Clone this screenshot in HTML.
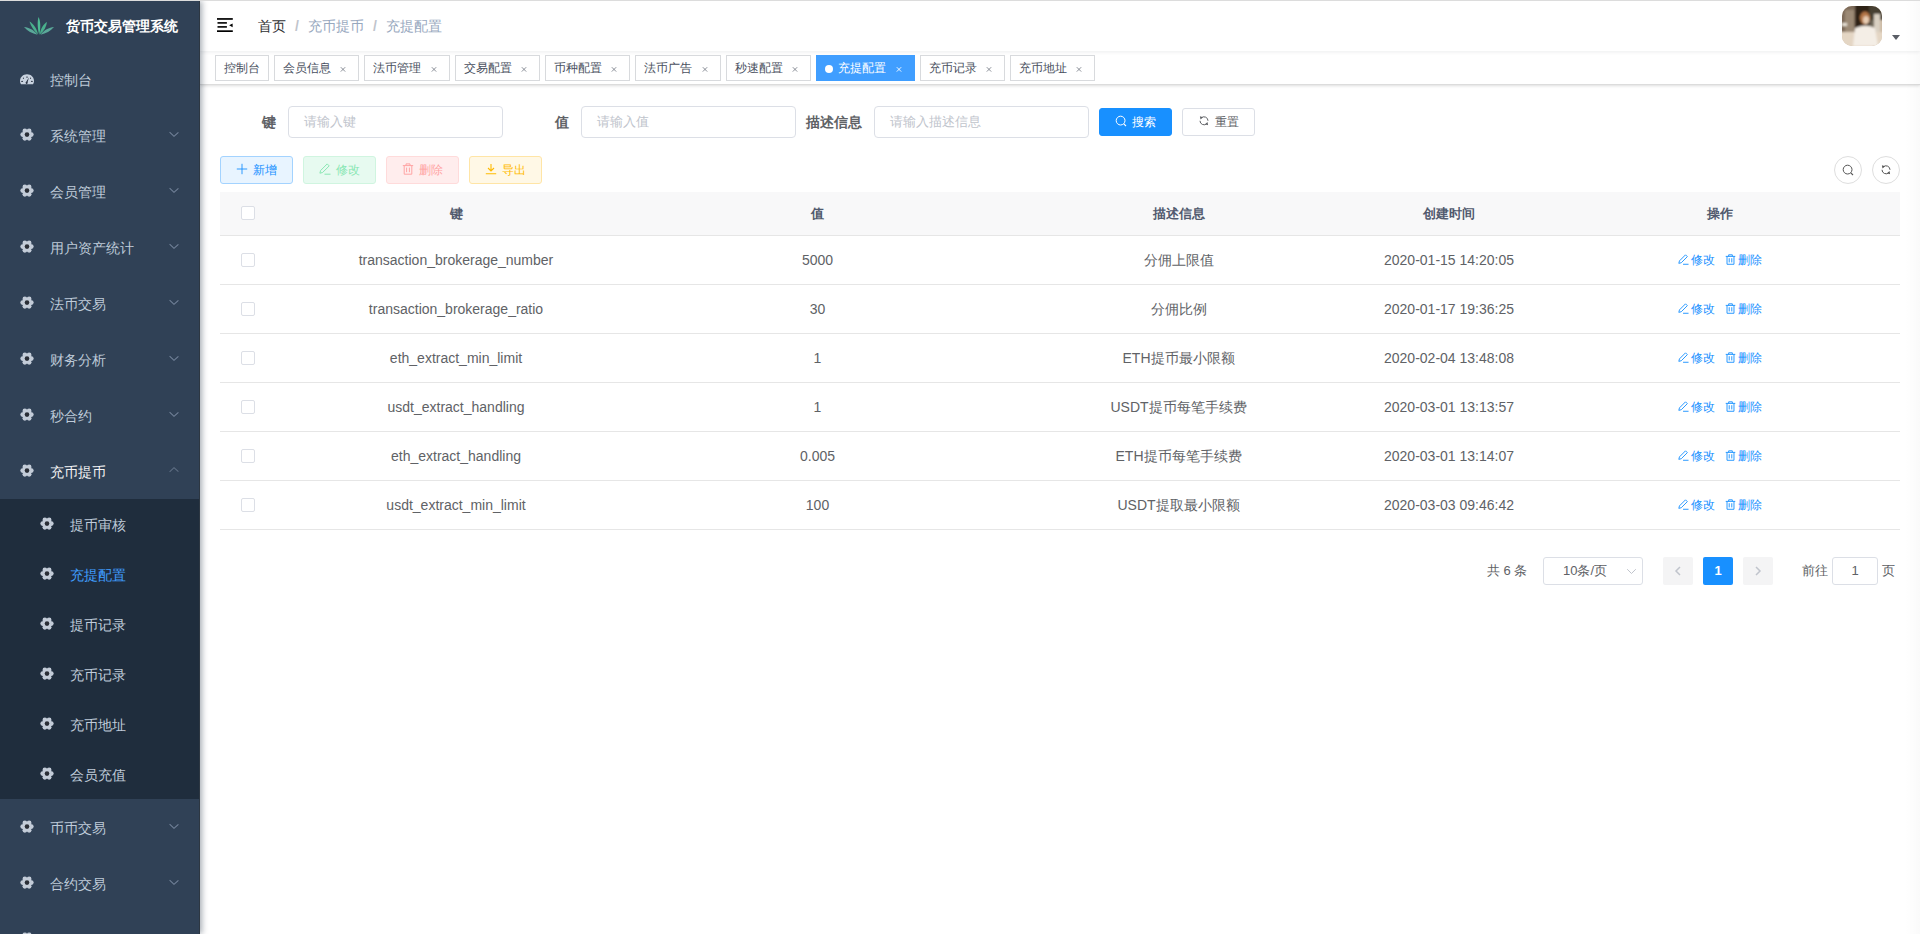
<!DOCTYPE html>
<html><head><meta charset="utf-8">
<style>
*{box-sizing:border-box;margin:0;padding:0}
html,body{width:1920px;height:934px;overflow:hidden;background:#fff;font-family:"Liberation Sans",sans-serif;}
.abs{position:absolute}
#topline{position:absolute;left:0;top:0;width:1920px;height:1px;background:#dcdcdc;z-index:50}
#rstrip{position:absolute;left:1905px;top:1px;width:15px;height:933px;background:linear-gradient(90deg,rgba(0,0,0,0),rgba(0,0,0,.02));z-index:40}
#main{position:absolute;left:0;top:0;width:1920px;height:934px}
/* sidebar */
#side{position:absolute;left:0;top:1px;width:200px;height:933px;background:#304156;z-index:10;box-shadow:2px 0 6px rgba(0,21,41,.35);overflow:hidden}
#sedge{position:absolute;left:199px;top:1px;width:1px;height:933px;background:#2d3742;z-index:11}
#logo{position:absolute;left:0;top:0;width:200px;height:50px}
#logo .t{position:absolute;left:66px;top:0;line-height:50px;color:#fff;font-weight:bold;font-size:14px;white-space:nowrap}
.mi{position:absolute;left:0;width:200px;height:56px;line-height:56px;color:#bfcbd9;font-size:14px}
.mi .ic{position:absolute;left:20px;top:21px;width:14px;height:14px}
.mi .tx{position:absolute;left:50px;top:1px}
.mi .ar{position:absolute;left:169px;top:24px;width:10px;height:6px}
.sub{position:absolute;left:0;width:200px;height:300px;background:#1f2d3d}
.si{position:absolute;left:0;width:200px;height:50px;line-height:50px;color:#bfcbd9;font-size:14px}
.si .ic{position:absolute;left:40px;top:18px;width:14px;height:14px}
.si .tx{position:absolute;left:70px;top:1px}
.si.act{color:#409eff}
/* navbar */
#nav{position:absolute;left:200px;top:1px;width:1720px;height:50px;background:#fff;box-shadow:0 1px 4px rgba(0,21,41,.08);z-index:5}
#hamb{position:absolute;left:17px;top:17px}
.bc{position:absolute;top:0;line-height:50px;font-size:14px;white-space:nowrap}
#avatar{position:absolute;left:1642px;top:5px;width:40px;height:40px;border-radius:10px;background:linear-gradient(180deg,#4a3a2c 0%,#8a7560 30%,#e8e0d6 60%,#f3eee6 100%)}
/* tags */
#tags{position:absolute;left:200px;top:51px;width:1720px;height:34px;background:#fff;border-bottom:1px solid #dcdcdc;box-shadow:0 1px 3px 0 rgba(0,0,0,.12),0 0 3px 0 rgba(0,0,0,.04);z-index:4}
.tg{position:absolute;top:4px;height:26px;line-height:24px;border:1px solid #d8dadd;color:#495060;background:#fff;font-size:12px;padding-left:8px;white-space:nowrap}
.tg .x{position:absolute;top:4px;width:16px;height:16px}
.tg.act{background:#409eff;border-color:#409eff;color:#fff}
.tg.act .x{color:#fff}
.tg.act .dot{display:inline-block;width:8px;height:8px;border-radius:50%;background:#fff;margin-right:5px;position:relative;top:1px}
/* form */
.lbl{position:absolute;top:106px;height:32px;line-height:32px;font-size:14px;font-weight:bold;color:#606266;text-align:right;white-space:nowrap}
.inp{position:absolute;top:106px;height:32px;width:215px;border:1px solid #dcdfe6;border-radius:4px;background:#fff;line-height:30px;padding-left:15px;font-size:13px;color:#c0c4cc;white-space:nowrap}
.btn{position:absolute;height:28px;border-radius:3px;font-size:12px;line-height:26px;border:1px solid;white-space:nowrap;text-align:center}
.circ{position:absolute;top:156px;width:28px;height:28px;border-radius:50%;border:1px solid #dedede;background:#fff;text-align:center;line-height:26px}
.circ svg{vertical-align:middle;position:relative;top:-1px}
/* table */
#tbl{position:absolute;left:220px;top:191px;width:1680px}
.row{position:absolute;left:0;width:1680px;border-bottom:1px solid #e6e6e6}
.c{position:absolute;top:0;text-align:center;font-size:14px;color:#606266;white-space:nowrap}
.c.th{font-weight:bold;color:#515a6e;font-size:13px}
.c.op{font-size:12px;color:#1890ff}
.chk{position:absolute;left:21px;width:14px;height:14px;border:1px solid #dcdfe6;border-radius:2px;background:#fff}
/* pagination */
.pt{position:absolute;top:557px;line-height:28px;font-size:13px;color:#606266;white-space:nowrap}
.psel{position:absolute;left:1543px;top:557px;width:100px;height:28px;border:1px solid #dcdfe6;border-radius:3px;line-height:26px;font-size:13px;color:#606266}
.pbtn{position:absolute;top:557px;width:30px;height:28px;border-radius:2px;background:#f4f4f5;text-align:center;line-height:28px;font-size:13px;font-weight:bold;color:#606266}
.pbtn svg{vertical-align:middle;position:relative;top:-1px}
.pbtn.act{background:#1890ff;color:#fff}
.pinp{position:absolute;left:1832px;top:557px;width:46px;height:28px;border:1px solid #dcdfe6;border-radius:3px;text-align:center;line-height:26px;font-size:13px;color:#606266}

</style></head>
<body>
<div id="topline"></div>
<div id="main">
<div class="lbl" style="left:220px;width:68px;padding-right:12px">键</div><div class="inp" style="left:288px">请输入键</div><div class="lbl" style="left:513px;width:68px;padding-right:12px">值</div><div class="inp" style="left:581px">请输入值</div><div class="lbl" style="left:806px;width:68px;padding-right:12px">描述信息</div><div class="inp" style="left:874px">请输入描述信息</div><div class="btn" style="left:1099px;top:108px;width:73px;background:#1890ff;border-color:#1890ff;color:#fff"><svg width="12" height="12" viewBox="0 0 12 12" style="vertical-align:-1px;margin-right:5px"><circle cx="5.6" cy="5.6" r="4.4" fill="none" stroke="#fff" stroke-width="1"/><path d="M8.8 8.8l2.2 2.2" stroke="#fff" stroke-width="1.1"/></svg>搜索</div><div class="btn" style="left:1182px;top:108px;width:73px;background:#fff;border-color:#dcdfe6;color:#606266"><svg width="12" height="12" viewBox="0 0 12 12" style="vertical-align:-1px;margin-right:5px"><path d="M3.17 2.97A4 4 0 0 1 10 5.8M2 5.8A4 4 0 0 0 8.83 8.63" fill="none" stroke="#606266" stroke-width="1"/><path d="M1.9 1.3L4.9 2.3L2.5 4.6z M10.1 10.3L7.1 9.3L9.5 7z" fill="#606266"/></svg>重置</div><div class="btn" style="left:220px;top:156px;width:73px;background:#e8f4ff;border-color:#a3d3ff;color:#1890ff"><svg width="12" height="12" viewBox="0 0 12 12" style="vertical-align:-1px;margin-right:5px"><path d="M6 0.8v10.4M0.8 6h10.4" stroke="#1890ff" stroke-width="0.9"/></svg>新增</div><div class="btn" style="left:303px;top:156px;width:73px;background:#e7faf0;border-color:#d0f5e0;color:#89e7b3"><svg width="12" height="12" viewBox="0 0 12 12" style="vertical-align:-1px;margin-right:5px"><path d="M8.2 0.9l2 2-6.6 6.6-2.7 0.7 0.7-2.7z M5.5 11.2h6" fill="none" stroke="#89e7b3" stroke-width="1"/></svg>修改</div><div class="btn" style="left:386px;top:156px;width:73px;background:#ffeded;border-color:#ffdbdb;color:#ffa4a4"><svg width="12" height="12" viewBox="0 0 12 12" style="vertical-align:-1px;margin-right:5px"><path d="M0.8 2.6h10.4M4 2.6V0.9h4v1.7M2.2 2.6v8.6h7.6V2.6M4.6 4.6v4.6M7.4 4.6v4.6" fill="none" stroke="#ffa4a4" stroke-width="1"/></svg>删除</div><div class="btn" style="left:469px;top:156px;width:73px;background:#fff8e6;border-color:#ffe5a6;color:#ffba00"><svg width="12" height="12" viewBox="0 0 12 12" style="vertical-align:-1px;margin-right:5px"><path d="M6 1v7M3 5l3 3 3-3M0.8 10.8h10.4" fill="none" stroke="#ffba00" stroke-width="1.1"/></svg>导出</div><div class="circ" style="left:1834px"><svg width="12" height="12" viewBox="0 0 12 12"><circle cx="5.6" cy="5.6" r="4.4" fill="none" stroke="#555" stroke-width="1"/><path d="M8.8 8.8l2.2 2.2" stroke="#555" stroke-width="1.1"/></svg></div><div class="circ" style="left:1872px"><svg width="12" height="12" viewBox="0 0 12 12"><path d="M3.17 2.97A4 4 0 0 1 10 5.8M2 5.8A4 4 0 0 0 8.83 8.63" fill="none" stroke="#555" stroke-width="1"/><path d="M1.9 1.3L4.9 2.3L2.5 4.6z M10.1 10.3L7.1 9.3L9.5 7z" fill="#555"/></svg></div>
<div id="tbl"><div class="row hdr" style="top:1px;height:44px;background:#f8f8f9"><div class="chk" style="top:14px"></div><div class="c th" style="left:55px;width:362px;line-height:43px">键</div><div class="c th" style="left:417px;width:361px;line-height:43px">值</div><div class="c th" style="left:778px;width:361px;line-height:43px">描述信息</div><div class="c th" style="left:1139px;width:180px;line-height:43px">创建时间</div><div class="c th" style="left:1319px;width:361px;line-height:43px">操作</div></div><div class="row" style="top:45px;height:49px"><div class="chk" style="top:17px"></div><div class="c" style="left:55px;width:362px;line-height:48px">transaction_brokerage_number</div><div class="c" style="left:417px;width:361px;line-height:48px">5000</div><div class="c" style="left:778px;width:361px;line-height:48px">分佣上限值</div><div class="c" style="left:1139px;width:180px;line-height:48px">2020-01-15 14:20:05</div><div class="c op" style="left:1319px;width:361px;line-height:48px"><span><svg width="11" height="11" viewBox="0 0 12 12" style="vertical-align:-1px;margin-right:2px"><path d="M8.2 0.9l2 2-6.6 6.6-2.7 0.7 0.7-2.7z M5.5 11.2h6" fill="none" stroke="#1890ff" stroke-width="1"/></svg>修改</span><span style="margin-left:10px"><svg width="11" height="11" viewBox="0 0 12 12" style="vertical-align:-1px;margin-right:2px"><path d="M0.8 2.6h10.4M4 2.6V0.9h4v1.7M2.2 2.6v8.6h7.6V2.6M4.6 4.6v4.6M7.4 4.6v4.6" fill="none" stroke="#1890ff" stroke-width="1"/></svg>删除</span></div></div><div class="row" style="top:94px;height:49px"><div class="chk" style="top:17px"></div><div class="c" style="left:55px;width:362px;line-height:48px">transaction_brokerage_ratio</div><div class="c" style="left:417px;width:361px;line-height:48px">30</div><div class="c" style="left:778px;width:361px;line-height:48px">分佣比例</div><div class="c" style="left:1139px;width:180px;line-height:48px">2020-01-17 19:36:25</div><div class="c op" style="left:1319px;width:361px;line-height:48px"><span><svg width="11" height="11" viewBox="0 0 12 12" style="vertical-align:-1px;margin-right:2px"><path d="M8.2 0.9l2 2-6.6 6.6-2.7 0.7 0.7-2.7z M5.5 11.2h6" fill="none" stroke="#1890ff" stroke-width="1"/></svg>修改</span><span style="margin-left:10px"><svg width="11" height="11" viewBox="0 0 12 12" style="vertical-align:-1px;margin-right:2px"><path d="M0.8 2.6h10.4M4 2.6V0.9h4v1.7M2.2 2.6v8.6h7.6V2.6M4.6 4.6v4.6M7.4 4.6v4.6" fill="none" stroke="#1890ff" stroke-width="1"/></svg>删除</span></div></div><div class="row" style="top:143px;height:49px"><div class="chk" style="top:17px"></div><div class="c" style="left:55px;width:362px;line-height:48px">eth_extract_min_limit</div><div class="c" style="left:417px;width:361px;line-height:48px">1</div><div class="c" style="left:778px;width:361px;line-height:48px">ETH提币最小限额</div><div class="c" style="left:1139px;width:180px;line-height:48px">2020-02-04 13:48:08</div><div class="c op" style="left:1319px;width:361px;line-height:48px"><span><svg width="11" height="11" viewBox="0 0 12 12" style="vertical-align:-1px;margin-right:2px"><path d="M8.2 0.9l2 2-6.6 6.6-2.7 0.7 0.7-2.7z M5.5 11.2h6" fill="none" stroke="#1890ff" stroke-width="1"/></svg>修改</span><span style="margin-left:10px"><svg width="11" height="11" viewBox="0 0 12 12" style="vertical-align:-1px;margin-right:2px"><path d="M0.8 2.6h10.4M4 2.6V0.9h4v1.7M2.2 2.6v8.6h7.6V2.6M4.6 4.6v4.6M7.4 4.6v4.6" fill="none" stroke="#1890ff" stroke-width="1"/></svg>删除</span></div></div><div class="row" style="top:192px;height:49px"><div class="chk" style="top:17px"></div><div class="c" style="left:55px;width:362px;line-height:48px">usdt_extract_handling</div><div class="c" style="left:417px;width:361px;line-height:48px">1</div><div class="c" style="left:778px;width:361px;line-height:48px">USDT提币每笔手续费</div><div class="c" style="left:1139px;width:180px;line-height:48px">2020-03-01 13:13:57</div><div class="c op" style="left:1319px;width:361px;line-height:48px"><span><svg width="11" height="11" viewBox="0 0 12 12" style="vertical-align:-1px;margin-right:2px"><path d="M8.2 0.9l2 2-6.6 6.6-2.7 0.7 0.7-2.7z M5.5 11.2h6" fill="none" stroke="#1890ff" stroke-width="1"/></svg>修改</span><span style="margin-left:10px"><svg width="11" height="11" viewBox="0 0 12 12" style="vertical-align:-1px;margin-right:2px"><path d="M0.8 2.6h10.4M4 2.6V0.9h4v1.7M2.2 2.6v8.6h7.6V2.6M4.6 4.6v4.6M7.4 4.6v4.6" fill="none" stroke="#1890ff" stroke-width="1"/></svg>删除</span></div></div><div class="row" style="top:241px;height:49px"><div class="chk" style="top:17px"></div><div class="c" style="left:55px;width:362px;line-height:48px">eth_extract_handling</div><div class="c" style="left:417px;width:361px;line-height:48px">0.005</div><div class="c" style="left:778px;width:361px;line-height:48px">ETH提币每笔手续费</div><div class="c" style="left:1139px;width:180px;line-height:48px">2020-03-01 13:14:07</div><div class="c op" style="left:1319px;width:361px;line-height:48px"><span><svg width="11" height="11" viewBox="0 0 12 12" style="vertical-align:-1px;margin-right:2px"><path d="M8.2 0.9l2 2-6.6 6.6-2.7 0.7 0.7-2.7z M5.5 11.2h6" fill="none" stroke="#1890ff" stroke-width="1"/></svg>修改</span><span style="margin-left:10px"><svg width="11" height="11" viewBox="0 0 12 12" style="vertical-align:-1px;margin-right:2px"><path d="M0.8 2.6h10.4M4 2.6V0.9h4v1.7M2.2 2.6v8.6h7.6V2.6M4.6 4.6v4.6M7.4 4.6v4.6" fill="none" stroke="#1890ff" stroke-width="1"/></svg>删除</span></div></div><div class="row" style="top:290px;height:49px"><div class="chk" style="top:17px"></div><div class="c" style="left:55px;width:362px;line-height:48px">usdt_extract_min_limit</div><div class="c" style="left:417px;width:361px;line-height:48px">100</div><div class="c" style="left:778px;width:361px;line-height:48px">USDT提取最小限额</div><div class="c" style="left:1139px;width:180px;line-height:48px">2020-03-03 09:46:42</div><div class="c op" style="left:1319px;width:361px;line-height:48px"><span><svg width="11" height="11" viewBox="0 0 12 12" style="vertical-align:-1px;margin-right:2px"><path d="M8.2 0.9l2 2-6.6 6.6-2.7 0.7 0.7-2.7z M5.5 11.2h6" fill="none" stroke="#1890ff" stroke-width="1"/></svg>修改</span><span style="margin-left:10px"><svg width="11" height="11" viewBox="0 0 12 12" style="vertical-align:-1px;margin-right:2px"><path d="M0.8 2.6h10.4M4 2.6V0.9h4v1.7M2.2 2.6v8.6h7.6V2.6M4.6 4.6v4.6M7.4 4.6v4.6" fill="none" stroke="#1890ff" stroke-width="1"/></svg>删除</span></div></div></div>
<span class="pt" style="left:1487px">共 6 条</span><div class="psel"><span style="position:absolute;left:19px;top:0">10条/页</span><svg style="position:absolute;left:82px;top:10px" width="11" height="7" viewBox="0 0 11 7"><path d="M1.2 1.2l4.3 4.3L9.8 1.2" fill="none" stroke="#c0c4cc" stroke-width="1"/></svg></div><div class="pbtn" style="left:1663px"><svg width="8" height="10" viewBox="0 0 8 10"><path d="M6 1L2 5l4 4" fill="none" stroke="#c0c4cc" stroke-width="1.5"/></svg></div><div class="pbtn act" style="left:1703px">1</div><div class="pbtn" style="left:1743px"><svg width="8" height="10" viewBox="0 0 8 10"><path d="M2 1l4 4-4 4" fill="none" stroke="#c0c4cc" stroke-width="1.5"/></svg></div><span class="pt" style="left:1802px">前往</span><div class="pinp">1</div><span class="pt" style="left:1882px">页</span>
</div>
<div id="nav"><svg id="hamb" width="16" height="14" viewBox="0 0 16 14"><g fill="#000"><rect x="0" y="0.1" width="15.8" height="1.7"/><rect x="0.5" y="4.1" width="9.4" height="1.6"/><rect x="0.5" y="8.1" width="9.4" height="1.6"/><rect x="0" y="12.3" width="15.8" height="1.7"/><path d="M15.6 5.6v3.6L12.2 7.2z"/></g></svg><span class="bc" style="left:58px;color:#303133">首页</span><span class="bc" style="left:95px;color:#c0c4cc;font-weight:bold">/</span><span class="bc" style="left:108px;color:#97a8be">充币提币</span><span class="bc" style="left:173px;color:#c0c4cc;font-weight:bold">/</span><span class="bc" style="left:186px;color:#97a8be">充提配置</span><svg class="abs" style="left:1642px;top:5px" width="40" height="40" viewBox="0 0 40 40"><defs><clipPath id="avc"><rect width="40" height="40" rx="10"/></clipPath><filter id="avb" x="-10%" y="-10%" width="120%" height="120%"><feGaussianBlur stdDeviation="1.1"/></filter></defs><g clip-path="url(#avc)"><rect width="40" height="40" fill="#cdbba6"/><g filter="url(#avb)"><rect x="-2" y="-2" width="16" height="30" fill="#7d6a58"/><rect x="3" y="4" width="9" height="22" fill="#9c8a76"/><rect x="13" y="-2" width="16" height="24" fill="#2e2119"/><rect x="27" y="-2" width="15" height="16" fill="#463f33"/><rect x="32" y="8" width="6" height="24" fill="#d9d0c2"/><rect x="28" y="14" width="4" height="18" fill="#6d6557"/><ellipse cx="23" cy="12" rx="5" ry="6.5" fill="#b47646"/><ellipse cx="24" cy="14" rx="3" ry="4" fill="#e7cdb4"/><rect x="-2" y="26" width="44" height="16" fill="#e4d6c4"/><path d="M11 40 L13 22 Q24 17 33 22 L36 40z" fill="#f4eee6"/><rect x="0" y="17" width="5" height="3" fill="#e9e2d6"/></g></g></svg><svg class="abs" style="left:1692px;top:34px" width="8" height="5" viewBox="0 0 8 5"><path d="M0 0h8L4 5z" fill="#5a5e66"/></svg></div>
<div id="tags"><div class="tg" style="left:15px;width:54px">控制台</div><div class="tg" style="left:74px;width:85px">会员信息<svg class="x" style="left:60px" width="16" height="16" viewBox="0 0 16 16"><path d="M5.8 7.2l4.4 4.4M10.2 7.2l-4.4 4.4" stroke="#7d828c" stroke-width="0.9"/></svg></div><div class="tg" style="left:164px;width:86px">法币管理<svg class="x" style="left:61px" width="16" height="16" viewBox="0 0 16 16"><path d="M5.8 7.2l4.4 4.4M10.2 7.2l-4.4 4.4" stroke="#7d828c" stroke-width="0.9"/></svg></div><div class="tg" style="left:255px;width:85px">交易配置<svg class="x" style="left:60px" width="16" height="16" viewBox="0 0 16 16"><path d="M5.8 7.2l4.4 4.4M10.2 7.2l-4.4 4.4" stroke="#7d828c" stroke-width="0.9"/></svg></div><div class="tg" style="left:345px;width:85px">币种配置<svg class="x" style="left:60px" width="16" height="16" viewBox="0 0 16 16"><path d="M5.8 7.2l4.4 4.4M10.2 7.2l-4.4 4.4" stroke="#7d828c" stroke-width="0.9"/></svg></div><div class="tg" style="left:435px;width:86px">法币广告<svg class="x" style="left:61px" width="16" height="16" viewBox="0 0 16 16"><path d="M5.8 7.2l4.4 4.4M10.2 7.2l-4.4 4.4" stroke="#7d828c" stroke-width="0.9"/></svg></div><div class="tg" style="left:526px;width:85px">秒速配置<svg class="x" style="left:60px" width="16" height="16" viewBox="0 0 16 16"><path d="M5.8 7.2l4.4 4.4M10.2 7.2l-4.4 4.4" stroke="#7d828c" stroke-width="0.9"/></svg></div><div class="tg act" style="left:616px;width:99px"><span class="dot"></span>充提配置<svg class="x" style="left:74px" width="16" height="16" viewBox="0 0 16 16"><path d="M5.8 7.2l4.4 4.4M10.2 7.2l-4.4 4.4" stroke="#fff" stroke-width="0.9"/></svg></div><div class="tg" style="left:720px;width:85px">充币记录<svg class="x" style="left:60px" width="16" height="16" viewBox="0 0 16 16"><path d="M5.8 7.2l4.4 4.4M10.2 7.2l-4.4 4.4" stroke="#7d828c" stroke-width="0.9"/></svg></div><div class="tg" style="left:810px;width:85px">充币地址<svg class="x" style="left:60px" width="16" height="16" viewBox="0 0 16 16"><path d="M5.8 7.2l4.4 4.4M10.2 7.2l-4.4 4.4" stroke="#7d828c" stroke-width="0.9"/></svg></div></div>
<div id="side"><div id="logo"><svg class="abs" style="left:23px;top:15px" width="32" height="22" viewBox="0 0 32 22"><g fill="#4dbb93"><path d="M15.6 1 C17.6 5 17.8 12 16.2 18.8 C14.4 12 14.2 5 15.6 1z"/><path d="M6.5 5.5 C10 7.5 13.5 12 15.2 18.5 C11 15 8 10.5 6.5 5.5z" fill="#49b08c"/><path d="M24 6 C20.5 8 17.5 12.5 16.8 18.5 C21 15 23.5 10.5 24 6z" fill="#49b08c"/><path d="M1 11 C6 11.5 11 14 14.5 18.8 C9 17.5 4.5 15 1 11z" fill="#5aa99a"/><path d="M31 11 C26 11.5 21 14 17.5 18.8 C23 17.5 27.5 15 31 11z" fill="#5aa99a"/></g></svg><div class="t">货币交易管理系统</div></div><div class="mi" style="top:50px"><svg class="ic" viewBox="0 0 14 14" style="top:22px"><path fill="#c8d2df" d="M1 11.2 C0.3 10.2 0 9.2 0 8 C0 4.1 3.1 1.2 7 1.2 C10.9 1.2 14 4.1 14 8 C14 9.2 13.7 10.2 13 11.2z"/><g fill="#2c3545"><ellipse cx="7" cy="4.1" rx="0.9" ry="0.55"/><ellipse cx="3.4" cy="5.3" rx="0.55" ry="0.8"/><ellipse cx="10.6" cy="5.3" rx="0.55" ry="0.8"/><ellipse cx="2.1" cy="8.4" rx="0.9" ry="0.55"/><ellipse cx="11.9" cy="8.4" rx="0.9" ry="0.55"/><path d="M8.9 4.5 L7.6 9.2 A1.1 1.1 0 1 1 6.2 8.8z"/></g></svg><span class="tx">控制台</span></div><div class="mi" style="top:106px"><svg class="ic" viewBox="0 0 14 14"><g fill="#c3ccd8"><circle cx="11.30" cy="6.60" r="2.35"/><circle cx="9.15" cy="10.32" r="2.35"/><circle cx="4.85" cy="10.32" r="2.35"/><circle cx="2.70" cy="6.60" r="2.35"/><circle cx="4.85" cy="2.88" r="2.35"/><circle cx="9.15" cy="2.88" r="2.35"/><circle cx="7" cy="6.6" r="4.8"/></g><circle cx="7" cy="6.6" r="2.3" fill="#2a2e36"/></svg><span class="tx">系统管理</span><svg class="ar" viewBox="0 0 10 6"><path d="M0.6 1.2L5 5.3L9.4 1.3" fill="none" stroke="#73839a" stroke-width="1.05"/></svg></div><div class="mi" style="top:162px"><svg class="ic" viewBox="0 0 14 14"><g fill="#c3ccd8"><circle cx="11.30" cy="6.60" r="2.35"/><circle cx="9.15" cy="10.32" r="2.35"/><circle cx="4.85" cy="10.32" r="2.35"/><circle cx="2.70" cy="6.60" r="2.35"/><circle cx="4.85" cy="2.88" r="2.35"/><circle cx="9.15" cy="2.88" r="2.35"/><circle cx="7" cy="6.6" r="4.8"/></g><circle cx="7" cy="6.6" r="2.3" fill="#2a2e36"/></svg><span class="tx">会员管理</span><svg class="ar" viewBox="0 0 10 6"><path d="M0.6 1.2L5 5.3L9.4 1.3" fill="none" stroke="#73839a" stroke-width="1.05"/></svg></div><div class="mi" style="top:218px"><svg class="ic" viewBox="0 0 14 14"><g fill="#c3ccd8"><circle cx="11.30" cy="6.60" r="2.35"/><circle cx="9.15" cy="10.32" r="2.35"/><circle cx="4.85" cy="10.32" r="2.35"/><circle cx="2.70" cy="6.60" r="2.35"/><circle cx="4.85" cy="2.88" r="2.35"/><circle cx="9.15" cy="2.88" r="2.35"/><circle cx="7" cy="6.6" r="4.8"/></g><circle cx="7" cy="6.6" r="2.3" fill="#2a2e36"/></svg><span class="tx">用户资产统计</span><svg class="ar" viewBox="0 0 10 6"><path d="M0.6 1.2L5 5.3L9.4 1.3" fill="none" stroke="#73839a" stroke-width="1.05"/></svg></div><div class="mi" style="top:274px"><svg class="ic" viewBox="0 0 14 14"><g fill="#c3ccd8"><circle cx="11.30" cy="6.60" r="2.35"/><circle cx="9.15" cy="10.32" r="2.35"/><circle cx="4.85" cy="10.32" r="2.35"/><circle cx="2.70" cy="6.60" r="2.35"/><circle cx="4.85" cy="2.88" r="2.35"/><circle cx="9.15" cy="2.88" r="2.35"/><circle cx="7" cy="6.6" r="4.8"/></g><circle cx="7" cy="6.6" r="2.3" fill="#2a2e36"/></svg><span class="tx">法币交易</span><svg class="ar" viewBox="0 0 10 6"><path d="M0.6 1.2L5 5.3L9.4 1.3" fill="none" stroke="#73839a" stroke-width="1.05"/></svg></div><div class="mi" style="top:330px"><svg class="ic" viewBox="0 0 14 14"><g fill="#c3ccd8"><circle cx="11.30" cy="6.60" r="2.35"/><circle cx="9.15" cy="10.32" r="2.35"/><circle cx="4.85" cy="10.32" r="2.35"/><circle cx="2.70" cy="6.60" r="2.35"/><circle cx="4.85" cy="2.88" r="2.35"/><circle cx="9.15" cy="2.88" r="2.35"/><circle cx="7" cy="6.6" r="4.8"/></g><circle cx="7" cy="6.6" r="2.3" fill="#2a2e36"/></svg><span class="tx">财务分析</span><svg class="ar" viewBox="0 0 10 6"><path d="M0.6 1.2L5 5.3L9.4 1.3" fill="none" stroke="#73839a" stroke-width="1.05"/></svg></div><div class="mi" style="top:386px"><svg class="ic" viewBox="0 0 14 14"><g fill="#c3ccd8"><circle cx="11.30" cy="6.60" r="2.35"/><circle cx="9.15" cy="10.32" r="2.35"/><circle cx="4.85" cy="10.32" r="2.35"/><circle cx="2.70" cy="6.60" r="2.35"/><circle cx="4.85" cy="2.88" r="2.35"/><circle cx="9.15" cy="2.88" r="2.35"/><circle cx="7" cy="6.6" r="4.8"/></g><circle cx="7" cy="6.6" r="2.3" fill="#2a2e36"/></svg><span class="tx">秒合约</span><svg class="ar" viewBox="0 0 10 6"><path d="M0.6 1.2L5 5.3L9.4 1.3" fill="none" stroke="#73839a" stroke-width="1.05"/></svg></div><div class="mi" style="top:442px;color:#f4f4f5"><svg class="ic" viewBox="0 0 14 14"><g fill="#c3ccd8"><circle cx="11.30" cy="6.60" r="2.35"/><circle cx="9.15" cy="10.32" r="2.35"/><circle cx="4.85" cy="10.32" r="2.35"/><circle cx="2.70" cy="6.60" r="2.35"/><circle cx="4.85" cy="2.88" r="2.35"/><circle cx="9.15" cy="2.88" r="2.35"/><circle cx="7" cy="6.6" r="4.8"/></g><circle cx="7" cy="6.6" r="2.3" fill="#2a2e36"/></svg><span class="tx">充币提币</span><svg class="ar" viewBox="0 0 10 6"><path d="M0.6 4.8L5 0.7L9.4 4.7" fill="none" stroke="#5f6f84" stroke-width="1.05"/></svg></div><div class="sub" style="top:498px"><div class="si" style="top:0px"><svg class="ic" viewBox="0 0 14 14"><g fill="#c3ccd8"><circle cx="11.30" cy="6.60" r="2.35"/><circle cx="9.15" cy="10.32" r="2.35"/><circle cx="4.85" cy="10.32" r="2.35"/><circle cx="2.70" cy="6.60" r="2.35"/><circle cx="4.85" cy="2.88" r="2.35"/><circle cx="9.15" cy="2.88" r="2.35"/><circle cx="7" cy="6.6" r="4.8"/></g><circle cx="7" cy="6.6" r="2.3" fill="#2a2e36"/></svg><span class="tx">提币审核</span></div><div class="si act" style="top:50px"><svg class="ic" viewBox="0 0 14 14"><g fill="#c3ccd8"><circle cx="11.30" cy="6.60" r="2.35"/><circle cx="9.15" cy="10.32" r="2.35"/><circle cx="4.85" cy="10.32" r="2.35"/><circle cx="2.70" cy="6.60" r="2.35"/><circle cx="4.85" cy="2.88" r="2.35"/><circle cx="9.15" cy="2.88" r="2.35"/><circle cx="7" cy="6.6" r="4.8"/></g><circle cx="7" cy="6.6" r="2.3" fill="#2a2e36"/></svg><span class="tx">充提配置</span></div><div class="si" style="top:100px"><svg class="ic" viewBox="0 0 14 14"><g fill="#c3ccd8"><circle cx="11.30" cy="6.60" r="2.35"/><circle cx="9.15" cy="10.32" r="2.35"/><circle cx="4.85" cy="10.32" r="2.35"/><circle cx="2.70" cy="6.60" r="2.35"/><circle cx="4.85" cy="2.88" r="2.35"/><circle cx="9.15" cy="2.88" r="2.35"/><circle cx="7" cy="6.6" r="4.8"/></g><circle cx="7" cy="6.6" r="2.3" fill="#2a2e36"/></svg><span class="tx">提币记录</span></div><div class="si" style="top:150px"><svg class="ic" viewBox="0 0 14 14"><g fill="#c3ccd8"><circle cx="11.30" cy="6.60" r="2.35"/><circle cx="9.15" cy="10.32" r="2.35"/><circle cx="4.85" cy="10.32" r="2.35"/><circle cx="2.70" cy="6.60" r="2.35"/><circle cx="4.85" cy="2.88" r="2.35"/><circle cx="9.15" cy="2.88" r="2.35"/><circle cx="7" cy="6.6" r="4.8"/></g><circle cx="7" cy="6.6" r="2.3" fill="#2a2e36"/></svg><span class="tx">充币记录</span></div><div class="si" style="top:200px"><svg class="ic" viewBox="0 0 14 14"><g fill="#c3ccd8"><circle cx="11.30" cy="6.60" r="2.35"/><circle cx="9.15" cy="10.32" r="2.35"/><circle cx="4.85" cy="10.32" r="2.35"/><circle cx="2.70" cy="6.60" r="2.35"/><circle cx="4.85" cy="2.88" r="2.35"/><circle cx="9.15" cy="2.88" r="2.35"/><circle cx="7" cy="6.6" r="4.8"/></g><circle cx="7" cy="6.6" r="2.3" fill="#2a2e36"/></svg><span class="tx">充币地址</span></div><div class="si" style="top:250px"><svg class="ic" viewBox="0 0 14 14"><g fill="#c3ccd8"><circle cx="11.30" cy="6.60" r="2.35"/><circle cx="9.15" cy="10.32" r="2.35"/><circle cx="4.85" cy="10.32" r="2.35"/><circle cx="2.70" cy="6.60" r="2.35"/><circle cx="4.85" cy="2.88" r="2.35"/><circle cx="9.15" cy="2.88" r="2.35"/><circle cx="7" cy="6.6" r="4.8"/></g><circle cx="7" cy="6.6" r="2.3" fill="#2a2e36"/></svg><span class="tx">会员充值</span></div></div><div class="mi" style="top:798px"><svg class="ic" viewBox="0 0 14 14"><g fill="#c3ccd8"><circle cx="11.30" cy="6.60" r="2.35"/><circle cx="9.15" cy="10.32" r="2.35"/><circle cx="4.85" cy="10.32" r="2.35"/><circle cx="2.70" cy="6.60" r="2.35"/><circle cx="4.85" cy="2.88" r="2.35"/><circle cx="9.15" cy="2.88" r="2.35"/><circle cx="7" cy="6.6" r="4.8"/></g><circle cx="7" cy="6.6" r="2.3" fill="#2a2e36"/></svg><span class="tx">币币交易</span><svg class="ar" viewBox="0 0 10 6"><path d="M0.6 1.2L5 5.3L9.4 1.3" fill="none" stroke="#73839a" stroke-width="1.05"/></svg></div><div class="mi" style="top:854px"><svg class="ic" viewBox="0 0 14 14"><g fill="#c3ccd8"><circle cx="11.30" cy="6.60" r="2.35"/><circle cx="9.15" cy="10.32" r="2.35"/><circle cx="4.85" cy="10.32" r="2.35"/><circle cx="2.70" cy="6.60" r="2.35"/><circle cx="4.85" cy="2.88" r="2.35"/><circle cx="9.15" cy="2.88" r="2.35"/><circle cx="7" cy="6.6" r="4.8"/></g><circle cx="7" cy="6.6" r="2.3" fill="#2a2e36"/></svg><span class="tx">合约交易</span><svg class="ar" viewBox="0 0 10 6"><path d="M0.6 1.2L5 5.3L9.4 1.3" fill="none" stroke="#73839a" stroke-width="1.05"/></svg></div><div class="mi" style="top:910px"><svg class="ic" viewBox="0 0 14 14"><g fill="#c3ccd8"><circle cx="11.30" cy="6.60" r="2.35"/><circle cx="9.15" cy="10.32" r="2.35"/><circle cx="4.85" cy="10.32" r="2.35"/><circle cx="2.70" cy="6.60" r="2.35"/><circle cx="4.85" cy="2.88" r="2.35"/><circle cx="9.15" cy="2.88" r="2.35"/><circle cx="7" cy="6.6" r="4.8"/></g><circle cx="7" cy="6.6" r="2.3" fill="#2a2e36"/></svg></div></div>
<div id="sedge"></div><div id="rstrip"></div>
</body></html>
